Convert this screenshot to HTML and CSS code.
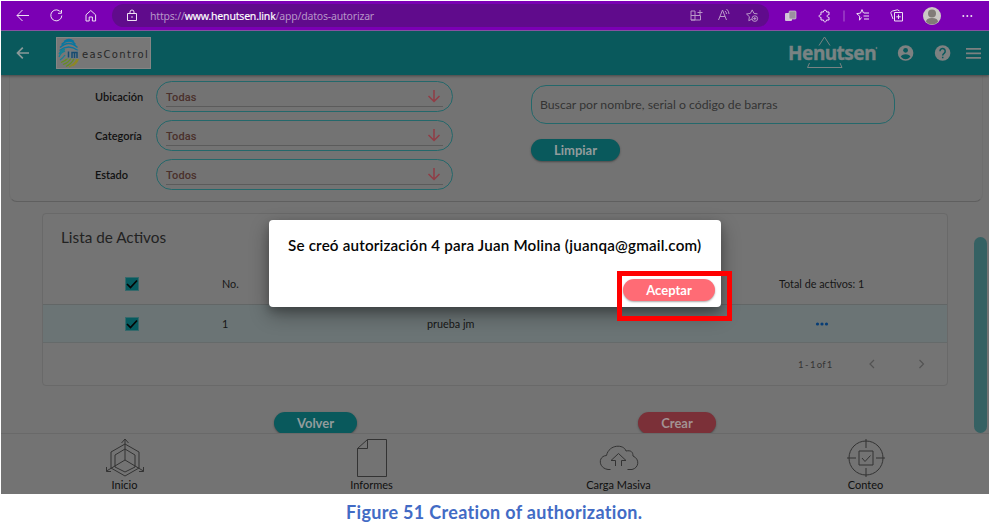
FILE: index.html
```html
<!DOCTYPE html>
<html lang="es">
<head>
<meta charset="utf-8">
<title>Datos autorizar</title>
<link rel="stylesheet" href="styles.css">
</head>
<body>
<main class="shot">
  <div class="browser">
    <svg class="nav-icons" width="120" height="30" viewBox="1 1 120 30">
      <path d="M29 15.500H17M22.500 10l-5.500 5.500 5.500 5.500"/>
      <path d="M61 12.500a5.500 5.500 0 1 0 .8 3M61.500 10v3.300h-3.500"/>
      <path d="M86 14.800l4.800-4.300 4.800 4.300v6.200h-3.200v-4h-3.200v4H86z"/>
    </svg>
    <div class="address">
      <svg width="14" height="16" viewBox="0 0 14 16"><path d="M2.500 5.500h9v7h-9zM5 5.500V4a2 2 0 0 1 4 0v1.500"/><circle class="solid" cx="7" cy="9" r=".8"/></svg>
      <span class="url">https://<b>www.henutsen.link</b>/app/datos-autorizar</span>
      <svg class="address-tools" width="76" height="20" viewBox="688 6 76 20">
        <path d="M691 11h4v9h-4zM691 15.500h9.500V20H691M697.500 12.500h5M700 10v5"/>
        <path d="M718.500 20l4-10 4 10M720 16.500h5M725 11q1.500 1 1.500 3M726.500 9q2.500 2 2.500 5"/>
        <path d="M752 19l-3.200 1.700.6-4-2.900-2.700 3.900-.6 1.800-3.500 1.800 3.500 3.500.5"/>
        <circle cx="754.800" cy="18.600" r="2.800"/><path d="M754.800 17v3.200M753.200 18.600h3.200"/>
      </svg>
    </div>
    <svg class="browser-tools" width="219" height="30" viewBox="770 1 219 30">
      <rect x="785" y="13" width="7" height="8" rx="1" fill="#d2c3d8" stroke="none"/><rect x="789" y="11" width="7" height="8" rx="1" fill="#9b8fa0" stroke="#ddd" stroke-width=".6"/>
      <path d="M821 12h2.500c-.5-2.500 3.500-2.500 3 0h2.500v2.800c-2.500-.5-2.500 3 0 2.500V20h-2.500c.3 2.500-3.300 2.500-3 0H821v-2.700c-2.500.5-2.500-3 0-2.500z"/>
      <path class="faint" d="M844 10.500v11"/>
      <path d="M861.500 17.500l-2 2.700.2-4-3-2.500 3.800-.6 1.500-3.500 1.500 3.500M864 13h5M863.500 16h5.500M864 19h5"/>
      <path d="M893 19l-2-5.500c-.4-1.500.3-2 1.500-2.500l5-1.200 2 1.200M894.500 12.500h8V21h-8zM898.500 14.500v4.500M896.300 16.800h4.400"/>
      <circle cx="932" cy="16" r="9" fill="#cbc8c5" stroke="none"/><circle cx="932" cy="13.500" r="4" fill="#817b78" stroke="none"/><path d="M926 22q0-4 6-4t6 4q-6 5-12 0z" fill="#817b78" stroke="none"/>
      <g class="solid"><circle cx="963.300" cy="16" r="1"/><circle cx="967.300" cy="16" r="1"/><circle cx="971.300" cy="16" r="1"/></g>
    </svg>
  </div>

  <header class="appbar">
    <svg class="back" width="16" height="16" viewBox="0 0 16 16"><path d="M14 8H3M7.800 2.700L2.500 8l5.300 5.300"/></svg>
    <div class="brand">
      <svg width="24" height="30" viewBox="0 0 24 30">
        <g fill="none" stroke-width="1.300">
          <path stroke="#0876a0" d="M7 3.500q5-4 10 0M4.500 6.500q8-7 14 0M3 9.500q9-8 17.500 0M2.500 12.500q9-7 18.500 0"/>
          <path stroke="#168195" d="M2 16q2-4 6-5M2 19q2-5 6-6M3 22q3-2 5-5"/>
          <path stroke="#668e20" d="M4 24.500q5-2 7-4.500M6 26.500q6-2 8-6.500M9 28.500q6-3 8-8"/>
          <path stroke="#8d8725" d="M12 29q6-3 8-8M16 28q4-3 5.500-7"/>
        </g>
        <path d="M9 12.500h13v8H9z" fill="#707b80"/>
        <path d="M11.500 13.500v6M15 20v-5.500h5V20M17.500 15v5" fill="none" stroke="#164b70" stroke-width="1.500"/>
      </svg><span>easControl</span>
    </div>
    <div class="henutsen">
      <svg width="92" height="36" viewBox="786 36 92 36"><path d="M819 46.500l5.500-8.500 5.500 8.500M809.500 64l-2 4.500H842l-2-4.500"/><circle cx="876.500" cy="49" r=".6"/></svg>
      <span>Henutsen</span>
    </div>
    <svg class="app-icons" width="94" height="24" viewBox="895 41 94 24">
      <circle cx="905.600" cy="53" r="7.800"/><circle class="hole" cx="905.600" cy="50.300" r="2.400"/><path class="hole" d="M900.800 56.700q.8-2.500 4.800-2.500t4.800 2.500q-4.800 5-9.600 0z"/>
      <circle cx="942.600" cy="53" r="7.800"/><path class="question" d="M940 51.200a2.600 2.600 0 1 1 4.300 1.900q-1.600 1.100-1.600 2.400M942.700 56.800v1.500"/>
      <path d="M966 48h15v1.700h-15zM966 52.500h15v1.700h-15zM966 57h15v1.700h-15z"/>
    </svg>
  </header>

  <section class="content">
    <div class="filters">
      <div class="selects">
        <label>Ubicación</label><div class="select"><div><span>Todas</span><svg width="14" height="14" viewBox="0 0 14 14"><path d="M7 1v11.500M1.500 7L7 12.500 12.500 7"/></svg></div></div>
        <label>Categoría</label><div class="select"><div><span>Todas</span><svg width="14" height="14" viewBox="0 0 14 14"><path d="M7 1v11.500M1.500 7L7 12.500 12.500 7"/></svg></div></div>
        <label>Estado</label><div class="select"><div><span>Todos</span><svg width="14" height="14" viewBox="0 0 14 14"><path d="M7 1v11.500M1.500 7L7 12.500 12.500 7"/></svg></div></div>
      </div>
      <div class="search">
        <div class="search-box">Buscar por nombre, serial o código de barras</div>
        <div class="button clear">Limpiar</div>
      </div>
    </div>

    <div class="list">
      <h2>Lista de Activos</h2>
      <div class="row head">
        <svg class="check" width="14" height="14" viewBox="0 0 14 14"><path d="M2 7l3.500 3.500 6.500-7"/></svg>
        <span>No.</span><span></span><span>Total de activos: 1</span>
      </div>
      <div class="row item">
        <svg class="check" width="14" height="14" viewBox="0 0 14 14"><path d="M2 7l3.500 3.500 6.500-7"/></svg>
        <span>1</span><span>prueba jm</span>
        <svg class="more" width="14" height="6" viewBox="0 0 14 6"><circle cx="2.500" cy="3" r="1.600"/><circle cx="7" cy="3" r="1.600"/><circle cx="11.500" cy="3" r="1.600"/></svg>
      </div>
      <div class="pager"><span>1 - 1 of 1</span><svg width="60" height="12" viewBox="0 0 60 12"><path d="M7 2L3 6l4 4M52.500 2l4 4-4 4"/></svg></div>
    </div>

    <div class="actions"><div class="button return">Volver</div><div class="button create">Crear</div></div>
    <div class="scrollbar"></div>
  </section>

  <nav class="tabs">
    <div><svg width="40" height="40" viewBox="0 0 40 40"><path d="M20 6l14 8v16l-14 8-14-8V14zM20 11l10 6v12l-10 5-10-5V17zM20 1.500V22M20 22L1.500 33M20 22l18.500 11M16.500 5L20 1l3.500 4M1.500 29v4.500H6M38.500 29v4.500H34"/></svg><span>Inicio</span></div>
    <div><svg width="40" height="40" viewBox="0 0 40 40"><path d="M15.500 1.500h19v37h-29v-28zM15.500 1.500v9h-10"/></svg><span>Informes</span></div>
    <div><svg width="40" height="40" viewBox="0 0 40 40"><path d="M11.500 31.500H9C-1 30-1 18 7.500 17.500 10 6 25 6 27 13c5-1 7 1 7 5 7 3 6 12-1 13.500h-4.500M16.500 28v-5.500H12l7.500-7 7.500 7h-4.500V28"/></svg><span>Carga Masiva</span></div>
    <div><svg width="40" height="40" viewBox="0 0 40 40"><circle cx="20" cy="20" r="17"/><path d="M13 13h14v14H13zM16 20l3 3.500 5.500-6M20 1v9M20 30v9M1 20h9M30 20h9"/></svg><span>Conteo</span></div>
  </nav>
  <div class="dialog" role="dialog"><p>Se creó autorización 4 para Juan Molina (juanqa@gmail.com)</p><div class="button accept">Aceptar</div></div>
  <div class="highlight"></div>
</main>
<p class="caption">Figure 51 Creation of authorization.</p>
</body>
</html>
```
FILE: styles.css
```css
* { box-sizing: border-box; }
body { margin: 0; padding: 1px 2px 0 1px; width: 991px; height: 528px; overflow: hidden; background: #fff; font-family: Lato, sans-serif; }
svg { display: block; flex-shrink: 0; }
.shot { position: relative; width: 988px; height: 493px; background: #737373; }
.browser { height: 29px; display: flex; align-items: center; background: #7b00b4; }
.browser svg { fill: none; stroke: #eee2f2; stroke-width: 1; }
.browser .solid { fill: #eee2f2; stroke: none; }
.browser .faint { stroke: #ae62cf; }
.nav-icons { margin-right: -9px; }
.address { width: 657px; height: 23px; border-radius: 12px; background: #600b8c; display: flex; align-items: center; padding-left: 13px; }
.url { width: 225px; margin-left: 11px; font: 10.500px "Noto Sans", sans-serif; letter-spacing: -.19px; color: #b795c8; white-space: nowrap; }
.url b { font-weight: 400; color: #fff; -webkit-text-stroke: .15px #fff; }
.address .address-tools { margin-left: auto; margin-right: 5px; stroke: #b998c8; }
.browser-tools { margin-left: 1px; }
.appbar { height: 45px; border-top: 1px solid #8751a1; background: #09595c; display: flex; align-items: center; box-shadow: 0 1px 3px #444; clip-path: inset(0 0 -5px 0); position: relative; z-index: 1; padding-bottom: 1px; }
.back { margin-left: 14px; fill: none; stroke: #8b9999; stroke-width: 1.700; }
.brand { width: 95px; height: 32px; margin-left: 25px; background: #777; border: 1px solid #858585; display: flex; align-items: center; }
.brand span { font: 10px "DejaVu Sans", sans-serif; color: #282828; letter-spacing: 1.350px; margin: 3px 0 0 1px; white-space: nowrap; }
.henutsen { position: relative; width: 92px; height: 36px; margin-left: auto; color: #798383; }
.henutsen svg { fill: none; stroke: #798383; stroke-width: 1; }
.henutsen span { position: absolute; left: 2px; top: 7px; font: 700 19px/23px "Noto Sans", sans-serif; letter-spacing: -.5px; -webkit-text-stroke: .4px #798383; }
.app-icons { margin-left: 17px; fill: #7d8181; }
.app-icons .hole { fill: #09595c; }
.app-icons .question { fill: none; stroke: #09595c; stroke-width: 1.500; }
.content { position: relative; height: 358px; padding: 0 6px 0 8px; }
.filters { height: 127px; border: 1px solid #5f5f5f; border-top: 0; border-left-color: #6e6e6e; border-right-color: #6e6e6e; border-radius: 0 0 8px 8px; display: flex; padding: 6px 0 0 85px; }
.selects { display: grid; grid-template-columns: 61px 297px; grid-template-rows: repeat(3, 31px); row-gap: 8px; align-items: center; align-content: start; color: #111; font-size: 11px; font-weight: 600; }
.select { height: 31px; border: 1px solid #24686b; border-radius: 16px; padding: 3px 9px 0; }
.select div { height: 22px; border-bottom: 1px solid #5b5b5b; color: #4a302b; font: 500 11px Roboto, sans-serif; display: flex; align-items: center; justify-content: space-between; padding: 1px 2px 0 0; }
.select span { padding-top: 3px; letter-spacing: .1px; }
.select svg { fill: none; stroke: #913d46; stroke-width: 1.500; }
.search { margin: 4px 0 0 78px; }
.search-box { width: 364px; height: 39px; border: 1px solid #24686b; border-radius: 15px; padding-left: 8px; font-size: 12.250px; line-height: 37px; color: #343434; }
.button { height: 22px; border-radius: 11px; text-align: center; font-size: 13px; line-height: 22px; font-weight: 700; color: #929c9c; background: #09595c; box-shadow: 0 1px 2px #4b4b4b; }
.clear { width: 89px; margin-top: 15px; }
.list { margin: 11px 0 0 33px; width: 906px; height: 173px; border: 1px solid #696969; border-radius: 4px; background: #747474; color: #161616; }
h2 { margin: 0; height: 52px; padding: 12px 0 0 18px; font-size: 15.300px; line-height: 22px; font-weight: 400; color: #222; }
.row { display: grid; grid-template-columns: 97px 205px 352px 1fr; align-items: center; padding-left: 82px; font-size: 10.800px; }
.head { height: 38px; padding-bottom: 3px; }
.item { height: 39px; background: #6b7475; border-top: 1px solid #626666; border-bottom: 1px solid #656a6a; }
.check { background: #075b5f; fill: none; stroke: #050505; stroke-width: 1.700; outline: 1px solid #36696b; outline-offset: -1px; }
.more { margin-left: 36px; fill: #073d76; }
.pager { height: 42px; display: flex; align-items: center; padding-left: 755px; font-size: 9.500px; color: #343434; }
.pager span { width: 69px; word-spacing: -1px; }
.pager svg { fill: none; stroke: #535353; stroke-width: 1.200; }
.actions { display: flex; padding: 26px 0 0 265px; gap: 281px; }
.return { width: 83px; }
.create { width: 78px; background: #7b3038; color: #a29293; }
.scrollbar { position: absolute; right: 2px; top: 162px; width: 13px; height: 196px; border-radius: 7px; background: #356163; }
.tabs { position: relative; height: 61px; border-top: 1px solid #696969; background: #737373; display: grid; grid-template-columns: repeat(4, 247px); color: #101010; font-size: 11px; }
.tabs div { display: flex; flex-direction: column; align-items: center; padding-top: 4px; }
.tabs svg { fill: none; stroke: #333; stroke-width: 1; }
.tabs span { line-height: 13px; }
.dialog { position: absolute; left: 268px; top: 219px; width: 452px; height: 87px; padding: 14px 6px 0 19px; border-radius: 4px; background: #fff; box-shadow: 0 8px 20px #0005, 0 4px 8px #0003; }
.dialog p { margin: 0; font-size: 15.200px; letter-spacing: .18px; line-height: 22px; font-weight: 600; color: #050505; white-space: nowrap; }
.accept { width: 92px; margin: 23px 0 0 auto; background: #ff6b75; color: #fff; box-shadow: 0 1px 2px #aaa; }
.highlight { position: absolute; left: 616px; top: 270px; width: 115px; height: 50px; border: 5px solid #f00; }
.caption { margin: 7px 0 0 345px; font-size: 18px; letter-spacing: .32px; line-height: 22px; font-weight: 700; color: #426bc5; white-space: nowrap; }
```
